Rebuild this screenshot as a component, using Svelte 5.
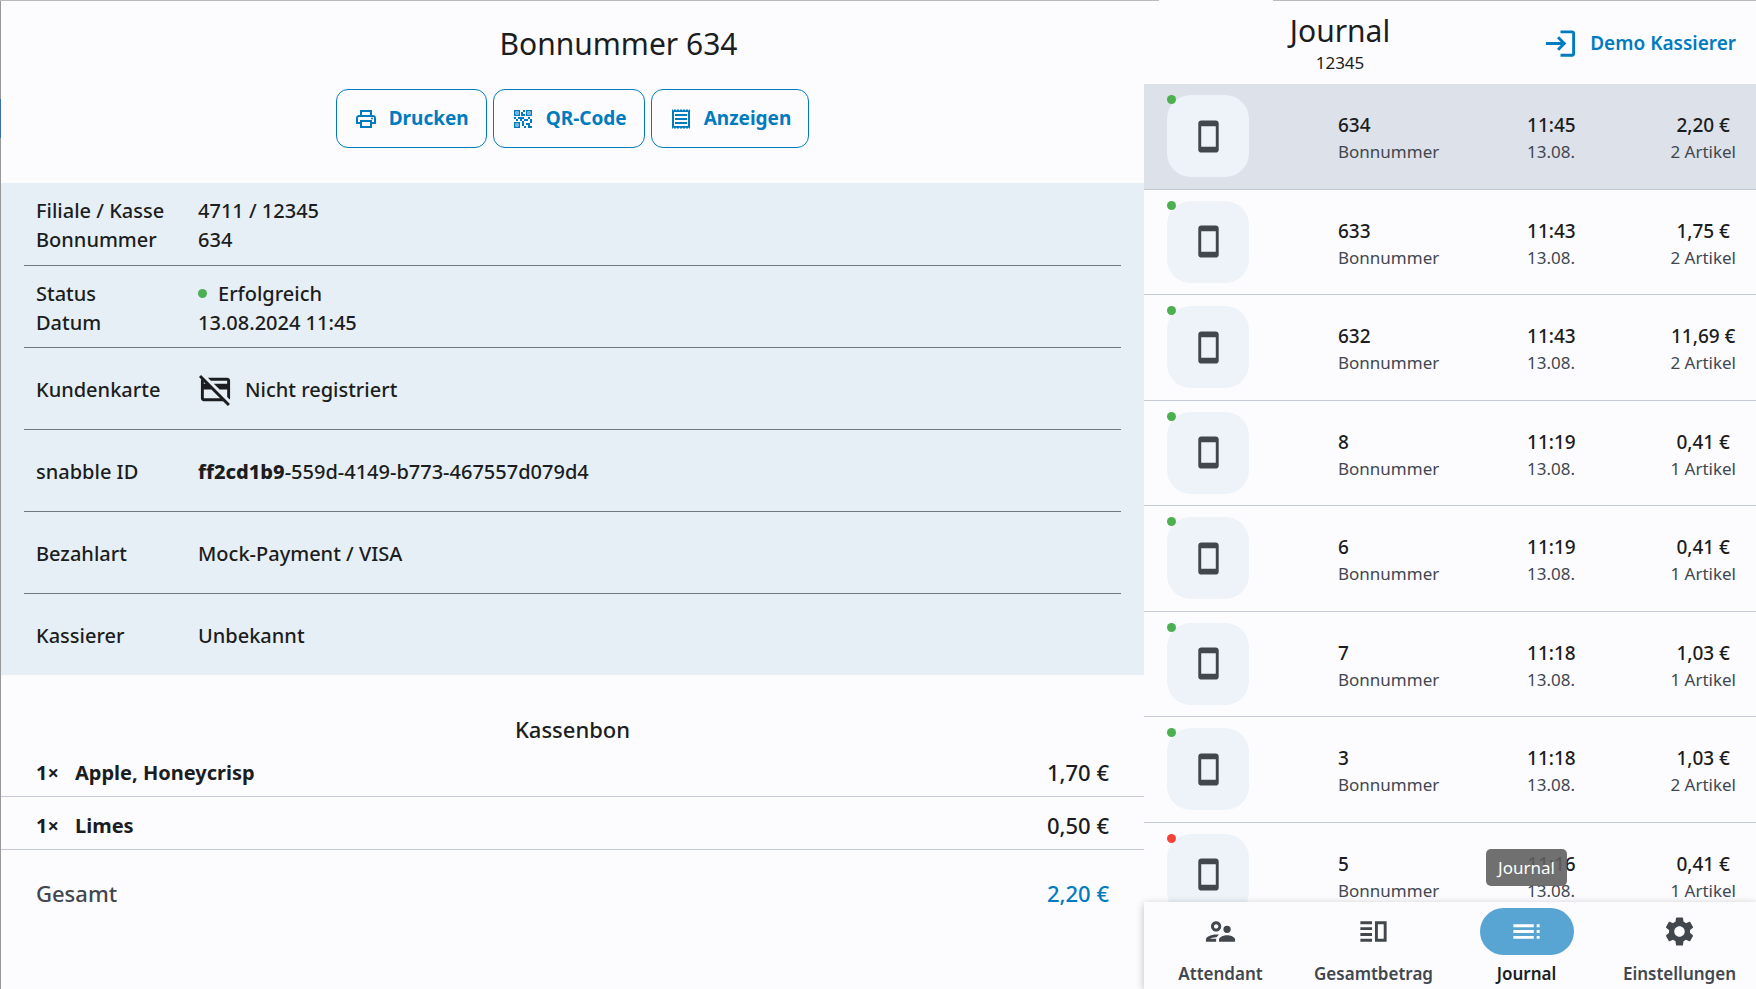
<script lang="ts">
  const actions = [
    { icon: "print", label: "Drucken" },
    { icon: "qr", label: "QR-Code" },
    { icon: "receipt", label: "Anzeigen" },
  ];

  const items = [
    { amount: 1, name: "Apple, Honeycrisp", price: "1,70 €" },
    { amount: 1, name: "Limes", price: "0,50 €" },
  ];

  const entries = [
    { id: "634", time: "11:45", total: "2,20 €", count: 2, ok: true },
    { id: "633", time: "11:43", total: "1,75 €", count: 2, ok: true },
    { id: "632", time: "11:43", total: "11,69 €", count: 2, ok: true },
    { id: "8", time: "11:19", total: "0,41 €", count: 1, ok: true },
    { id: "6", time: "11:19", total: "0,41 €", count: 1, ok: true },
    { id: "7", time: "11:18", total: "1,03 €", count: 1, ok: true },
    { id: "3", time: "11:18", total: "1,03 €", count: 2, ok: true },
    { id: "5", time: "11:16", total: "0,41 €", count: 1, ok: false },
  ];

  const tabs = [
    { icon: "people", label: "Attendant" },
    { icon: "split", label: "Gesamtbetrag" },
    { icon: "toc", label: "Journal" },
    { icon: "settings", label: "Einstellungen" },
  ];

  const icons: Record<string, string> = {
    print:
      "M19 8h-1V3H6v5H5c-1.66 0-3 1.34-3 3v6h4v4h12v-4h4v-6c0-1.66-1.34-3-3-3zM8 5h8v3H8V5zm8 14H8v-4h8v4zm2-4v-2H6v2H4v-4c0-.55.45-1 1-1h14c.55 0 1 .45 1 1v4h-2zM17 11.5a1 1 0 1 0 2 0a1 1 0 1 0-2 0z",
    qr: "M15 21h-2v-2h2v2zm-2-7h-2v5h2v-5zm8-2h-2v4h2v-4zm-2-2h-2v2h2v-2zM7 12H5v2h2v-2zm-2-2H3v2h2v-2zm7-5h2V3h-2v2zm-7.5-.5v3h3v-3h-3zM9 9H3V3h6v6zm-4.500 7.500v3h3v-3h-3zM9 21H3v-6h6v6zm7.500-16.500v3h3v-3h-3zM21 9h-6V3h6v6zm-2 10v-3h-4v2h2v3h4v-2h-2zm-2-7h-4v2h4v-2zm-4-2H7v2h2v2h2v-2h2v-2zm1-1V7h-2V5h-2v4h4zM6.750 5.250h-1.500v1.500h1.500v-1.500zm0 12h-1.500v1.500h1.500v-1.500zm12-12h-1.500v1.500h1.500v-1.500z",
    receipt:
      "M19.500 3.500L18 2l-1.500 1.500L15 2l-1.500 1.500L12 2l-1.500 1.500L9 2 7.500 3.500 6 2 4.500 3.500 3 2v20l1.500-1.500L6 22l1.500-1.500L9 22l1.500-1.500L12 22l1.500-1.500L15 22l1.500-1.500L18 22l1.500-1.500L21 22V2l-1.500 1.500zM19 19.090H5V4.910h14v14.180zM6 15h12v2H6zM6 11h12v2H6zM6 7h12v2H6z",
    login:
      "M11 7L9.600 8.400l2.600 2.600H2v2h10.200l-2.600 2.600L11 17l5-5-5-5zm9 12h-8v2h8c1.100 0 2-.9 2-2V5c0-1.100-.9-2-2-2h-8v2h8v14z",
    phone:
      "M17 1H7c-1.100 0-2 .9-2 2v18c0 1.100.9 2 2 2h10c1.100 0 2-.9 2-2V3c0-1.100-.9-2-2-2zM17 19H7V5h10v14z",
    cardOff:
      "M6.830 4H20c1.110 0 2 .89 2 2v12c0 .34-.08.66-.23.94L20 17.170V12h-5.170l-4-4H20V6H8.830l-2-2zM20.490 23.310L17.170 20H4c-1.110 0-2-.89-2-2L2.010 6c0-.34.08-.66.24-.93L.69 3.510 2.100 2.100l19.800 19.800-1.410 1.410zM4 6.830V8h1.170L4 6.830zM15.170 18l-6-6H4v6h11.170z",
    people:
      "M9 12c1.930 0 3.500-1.570 3.500-3.500S10.930 5 9 5 5.500 6.570 5.500 8.500 7.070 12 9 12zm0-5c.83 0 1.500.67 1.500 1.500S9.830 10 9 10s-1.500-.67-1.500-1.500S8.170 7 9 7zm.05 10H4.770c.99-.5 2.700-1 4.230-1 .11 0 .23.01.34.01.34-.73.93-1.330 1.640-1.810-.73-.13-1.420-.2-1.980-.2-2.340 0-7 1.170-7 3.500V19h7v-1.500c0-.17.02-.34.05-.5zm7.450-2.500c-1.840 0-5.500 1.010-5.500 3V19h11v-1.500c0-1.990-3.660-3-5.500-3zM14 10.500a2.500 2.500 0 1 0 5 0a2.500 2.500 0 1 0-5 0z",
    split:
      "M3 5h8v2H3zM3 9h8v2H3zM3 13h8v2H3zM3 17h8v2H3zM13 5h8v14h-8zM15 7v10h4V7z",
    toc: "M3 9h14V7H3v2zm0 4h14v-2H3v2zm0 4h14v-2H3v2zm16 0h2v-2h-2v2zm0-10v2h2V7h-2zm0 6h2v-2h-2v2z",
    settings:
      "M19.140 12.940c.04-.3.06-.61.06-.94 0-.32-.02-.64-.07-.94l2.030-1.580c.18-.14.23-.41.12-.61l-1.920-3.320c-.12-.22-.37-.29-.59-.22l-2.390.96c-.5-.38-1.030-.7-1.620-.94l-.36-2.540c-.04-.24-.24-.41-.48-.41h-3.840c-.24 0-.43.17-.47.41l-.36 2.540c-.59.24-1.130.57-1.620.94l-2.390-.96c-.22-.08-.47 0-.59.22L2.740 8.870c-.12.21-.08.47.12.61l2.030 1.580c-.05.3-.09.63-.09.94s.02.64.07.94l-2.030 1.580c-.18.14-.23.41-.12.61l1.920 3.320c.12.22.37.29.59.22l2.390-.96c.5.38 1.030.7 1.620.94l.36 2.540c.05.24.24.41.48.41h3.840c.24 0 .44-.17.47-.41l.36-2.540c.59-.24 1.130-.56 1.620-.94l2.390.96c.22.08.47 0 .59-.22l1.920-3.320c.12-.22.07-.47-.12-.61l-2.010-1.580zM12 15.600c-1.980 0-3.600-1.620-3.600-3.600s1.620-3.600 3.600-3.600 3.600 1.620 3.600 3.600-1.620 3.600-3.600 3.600z",
  };

  let selected = $state("634");
  let activeTab = $state("Journal");
</script>

{#snippet icon(name: string)}
  <svg class="icon" viewBox="0 0 24 24" aria-hidden="true">
    <path d={icons[name]} fill="currentColor" fill-rule="evenodd" />
  </svg>
{/snippet}

<div class="app">
  <main class="receipt">
    <h1>Bonnummer 634</h1>
    <div class="actions">
      {#each actions as action (action.label)}
        <button>
          {@render icon(action.icon)}
          {action.label}
        </button>
      {/each}
    </div>

    <section class="info">
      <dl>
        <div class="line"><dt>Filiale / Kasse</dt><dd>4711 / 12345</dd></div>
        <div class="line"><dt>Bonnummer</dt><dd>634</dd></div>
      </dl>
      <dl>
        <div class="line">
          <dt>Status</dt>
          <dd class="status"><span class="dot"></span>Erfolgreich</dd>
        </div>
        <div class="line"><dt>Datum</dt><dd>13.08.2024 11:45</dd></div>
      </dl>
      <dl>
        <div class="line">
          <dt>Kundenkarte</dt>
          <dd class="card">{@render icon("cardOff")}Nicht registriert</dd>
        </div>
      </dl>
      <dl>
        <div class="line">
          <dt>snabble ID</dt>
          <dd><b>ff2cd1b9</b>-559d-4149-b773-467557d079d4</dd>
        </div>
      </dl>
      <dl>
        <div class="line"><dt>Bezahlart</dt><dd>Mock-Payment / VISA</dd></div>
      </dl>
      <dl>
        <div class="line"><dt>Kassierer</dt><dd>Unbekannt</dd></div>
      </dl>
    </section>

    <h2>Kassenbon</h2>
    <ul class="items">
      {#each items as item (item.name)}
        <li>
          <span class="amount">{item.amount}×</span>
          <span class="name">{item.name}</span>
          <span class="price">{item.price}</span>
        </li>
      {/each}
    </ul>
    <div class="sum">
      <span>Gesamt</span>
      <span class="value">2,20 €</span>
    </div>
  </main>

  <aside class="journal">
    <header>
      <div class="title">
        <h1>Journal</h1>
        <p>12345</p>
      </div>
      <button class="login">
        {@render icon("login")}
        Demo Kassierer
      </button>
    </header>

    <div class="entries">
      {#each entries as entry (entry.id)}
        <button
          class="entry"
          class:selected={entry.id === selected}
          onclick={() => (selected = entry.id)}
        >
          <span class="tile">
            <span class="dot badge" class:failed={!entry.ok}></span>
            {@render icon("phone")}
          </span>
          <span class="cell"><strong>{entry.id}</strong><small>Bonnummer</small></span>
          <span class="cell"><strong>{entry.time}</strong><small>13.08.</small></span>
          <span class="cell total"><strong>{entry.total}</strong><small>{entry.count} Artikel</small></span>
        </button>
      {/each}
    </div>

    <nav>
      {#each tabs as tab (tab.label)}
        <button
          class="tab"
          class:active={tab.label === activeTab}
          onclick={() => (activeTab = tab.label)}
        >
          <span class="pill">{@render icon(tab.icon)}</span>
          {tab.label}
          {#if tab.label === activeTab}
            <span class="tooltip" role="tooltip">{tab.label}</span>
          {/if}
        </button>
      {/each}
    </nav>
  </aside>
</div>

<style>
  :global(body) {
    background: #fcfcff;
  }

  .app {
    --blue: #007bbf;
    --ink: #1b1d20;
    --muted: #42474e;
    --line: #c5cad2;
    display: grid;
    grid-template-columns: minmax(0, 1143fr) minmax(0, 612fr);
    height: 100vh;
    box-sizing: border-box;
    padding: 1px 0 0 1px;
    overflow: hidden;
    /* window edge: top line with a gap above the journal, left line with a blue part */
    background:
      linear-gradient(90deg, #b9b9bb 66%, transparent 66% 72.5%, #b9b9bb 72.5%) top / 100% 1px no-repeat,
      linear-gradient(#98989a 10%, #3a6fae 10% 14%, #98989a 14%) left / 1px 100% no-repeat,
      #fcfcff;
    color: var(--ink);
    font-family: "Noto Sans", "Open Sans", sans-serif;
    font-size: 19px;
    line-height: 29px;
    font-weight: 500;
  }

  h1,
  h2,
  p,
  dl,
  dd,
  ul {
    margin: 0;
    padding: 0;
  }

  button {
    font: inherit;
    color: inherit;
    background: none;
    border: none;
    padding: 0;
    cursor: pointer;
  }

  h1 {
    font-size: 30px;
    line-height: 38px;
    font-weight: 400;
  }

  .icon {
    width: 35px;
    height: 35px;
    flex: none;
  }

  .dot {
    width: 9px;
    height: 9px;
    border-radius: 50%;
    background: #4caf50;
  }

  .receipt {
    overflow: auto;
  }

  .receipt h1 {
    padding: 24px 0 0 92px;
    text-align: center;
  }

  .actions {
    display: flex;
    justify-content: center;
    gap: 6px;
    padding: 26px 0 35px;
  }

  .actions button {
    display: flex;
    align-items: center;
    gap: 11px;
    height: 59px;
    padding: 0 17px;
    border: 1px solid var(--blue);
    border-radius: 12px;
    color: var(--blue);
    font-weight: 700;
  }

  .actions .icon {
    width: 24px;
    height: 24px;
  }

  .info {
    padding: 0 23px;
    background: #e7eff6;
    font-size: 20px;
  }

  dl {
    display: flex;
    flex-direction: column;
    justify-content: center;
    box-sizing: border-box;
    height: 82px;
    padding: 2px 12px 0;
  }

  dl + dl {
    border-top: 1px solid #70777f;
  }

  .line {
    display: flex;
    align-items: center;
  }

  dt {
    width: 162px;
  }

  dd {
    display: flex;
  }

  .status {
    align-items: center;
    gap: 11px;
  }

  .card {
    align-items: center;
    gap: 12px;
  }

  b {
    font-weight: 800;
  }

  h2 {
    padding: 39px 0 0;
    text-align: center;
    font-size: 22px;
    line-height: 30px;
    font-weight: 500;
  }

  .items {
    list-style: none;
    font-size: 20px;
  }

  .items li {
    display: flex;
    align-items: center;
    box-sizing: border-box;
    height: 53px;
    padding: 4px 35px 0;
    border-bottom: 1px solid var(--line);
    font-weight: 700;
  }

  .items .amount {
    width: 39px;
  }

  .price {
    margin-left: auto;
    font-size: 22px;
    font-weight: 500;
  }

  .sum {
    display: flex;
    justify-content: space-between;
    padding: 29px 35px;
    color: var(--muted);
    font-size: 22px;
  }

  .sum .value {
    color: var(--blue);
  }

  .journal {
    display: flex;
    flex-direction: column;
    min-height: 0;
  }

  header {
    display: grid;
    grid-template-columns: 8fr 5fr;
    align-items: center;
    box-sizing: border-box;
    height: 83px;
    padding: 2px 20px 0;
    flex: none;
  }

  .title {
    text-align: center;
  }

  header p {
    font-size: 17px;
    line-height: 26px;
    font-weight: 400;
  }

  .login {
    display: flex;
    align-items: center;
    justify-content: flex-end;
    gap: 12px;
    color: var(--blue);
    font-weight: 600;
    white-space: nowrap;
  }

  .entries {
    display: grid;
    grid-auto-rows: max(105px, 12.9%);
    flex: 1;
    min-height: 0;
    overflow: hidden;
  }

  .entry {
    display: grid;
    grid-template-columns: 171px 186fr 141fr auto;
    align-items: center;
    box-sizing: border-box;
    width: 100%;
    padding: 0 20px 0 23px;
    border-bottom: 1px solid var(--line);
    text-align: left;
  }

  .selected {
    background: #dde1ea;
  }

  .tile {
    position: relative;
    display: flex;
    align-items: center;
    justify-content: center;
    width: 82px;
    height: 82px;
    border-radius: 24px;
    background: #edf3f8;
    color: var(--muted);
  }

  .badge {
    position: absolute;
    top: 0;
    left: 0;
  }

  .failed {
    background: #f44336;
  }

  .cell {
    display: flex;
    flex-direction: column;
    padding-top: 4px;
  }

  .total {
    align-items: center;
  }

  strong {
    line-height: 28px;
    font-weight: 500;
  }

  small {
    color: var(--muted);
    font-size: 17px;
    line-height: 26px;
    font-weight: 400;
  }

  nav {
    display: grid;
    grid-template-columns: repeat(4, 1fr);
    height: 87px;
    flex: none;
    background: #fcfcff;
    box-shadow: 0 2px 8px rgba(0, 0, 0, 0.25);
    z-index: 1;
  }

  .tab {
    position: relative;
    display: flex;
    flex-direction: column;
    align-items: center;
    gap: 4px;
    padding-top: 6px;
    color: var(--muted);
    font-size: 17px;
    font-weight: 600;
  }

  .pill {
    display: flex;
    align-items: center;
    justify-content: center;
    width: 94px;
    height: 47px;
    border-radius: 24px;
  }

  .active {
    color: var(--ink);
  }

  .active .pill {
    background: #58a4d3;
    color: #fff;
  }

  .tooltip {
    position: absolute;
    bottom: 103px;
    padding: 4px 12px;
    border-radius: 5px;
    background: rgba(97, 97, 97, 0.9);
    color: #fff;
    font-weight: 400;
  }
</style>
